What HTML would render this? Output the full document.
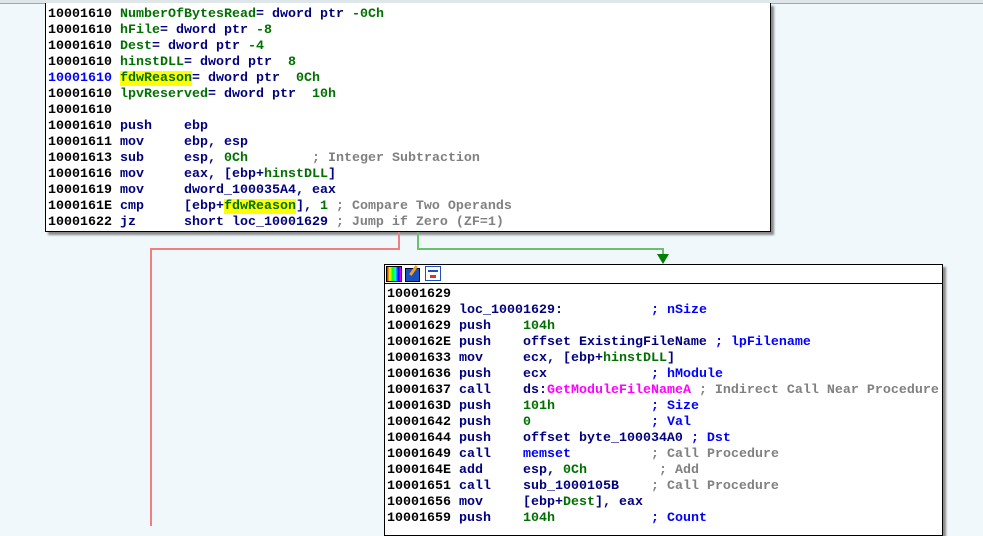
<!DOCTYPE html>
<html><head><style>
body{margin:0;width:983px;height:526px;background:#f0f8fc;position:relative;overflow:hidden;font-family:"Liberation Mono",monospace;}
.box{position:absolute;background:#fff;border:1px solid #000;box-shadow:3px 3px 2px #8a8a8a;}
pre{margin:0;font-family:"Liberation Mono",monospace;font-size:13.33px;line-height:16px;font-weight:bold;color:#000;position:absolute;}
.m{color:#000080}.g{color:#007000}.c{color:#808080}.b{color:#0000ff}.p{color:#ff00ff}.y{background:#ffff00}.a{color:#0000ff}
.ln{position:absolute;}
</style></head><body>
<div style="position:absolute;left:0;top:0;width:983px;height:3px;background:#dfe6ea;border-bottom:1px solid #9aa"></div>
<div class="box" style="left:45px;top:3px;width:724px;height:228px;border-top:none"></div>
<pre style="left:48px;top:7px"><span>10001610</span> <span class="g">NumberOfBytesRead</span><span class="m">= dword ptr </span><span class="g">-0Ch</span>
10001610 <span class="g">hFile</span><span class="m">= dword ptr </span><span class="g">-8</span>
10001610 <span class="g">Dest</span><span class="m">= dword ptr </span><span class="g">-4</span>
10001610 <span class="g">hinstDLL</span><span class="m">= dword ptr  </span><span class="g">8</span>
<span class="a">10001610</span> <span class="g y">fdwReason</span><span class="m">= dword ptr  </span><span class="g">0Ch</span>
10001610 <span class="g">lpvReserved</span><span class="m">= dword ptr  </span><span class="g">10h</span>
10001610
10001610 <span class="m">push    ebp</span>
10001611 <span class="m">mov     ebp, esp</span>
10001613 <span class="m">sub     esp, </span><span class="g">0Ch</span>        <span class="c">; Integer Subtraction</span>
10001616 <span class="m">mov     eax, [ebp+</span><span class="g">hinstDLL</span><span class="m">]</span>
10001619 <span class="m">mov     dword_100035A4, eax</span>
1000161E <span class="m">cmp     [ebp+</span><span class="g y">fdwReason</span><span class="m">], </span><span class="g">1</span> <span class="c">; Compare Two Operands</span>
10001622 <span class="m">jz      short loc_10001629</span> <span class="c">; Jump if Zero (ZF=1)</span></pre>
<div class="ln" style="left:398px;top:232px;width:2px;height:18px;background:#f08080"></div>
<div class="ln" style="left:150px;top:248px;width:250px;height:2px;background:#f08080"></div>
<div class="ln" style="left:150px;top:248px;width:2px;height:278px;background:#f08080"></div>
<div class="ln" style="left:417px;top:232px;width:2px;height:18px;background:#6cbf6c"></div>
<div class="ln" style="left:417px;top:248px;width:247px;height:2px;background:#6cbf6c"></div>
<div class="ln" style="left:662px;top:248px;width:2px;height:8px;background:#6cbf6c"></div>
<div class="ln" style="left:657px;top:254px;width:0;height:0;border-left:6px solid transparent;border-right:6px solid transparent;border-top:10px solid #008000"></div>
<div class="box" style="left:384px;top:264px;width:557px;height:270px"></div>
<div style="position:absolute;left:385px;top:283px;width:557px;height:1px;background:#000"></div>
<div style="position:absolute;left:386px;top:266px;width:14px;height:14px;background:linear-gradient(90deg,#f00,#ff0,#0f0,#0ff,#00f,#f0f);border:1px solid #000"></div>
<div style="position:absolute;left:405px;top:268px;width:13px;height:12px;background:#1a4fc0;border:1px solid #003"></div>
<div style="position:absolute;left:412px;top:265px;width:3px;height:11px;background:#f0a020;transform:rotate(35deg)"></div>
<div style="position:absolute;left:425px;top:266px;width:14px;height:13px;background:#fff;border:1px solid #2050c0"><div style="margin:3px 2px;height:2px;background:#2050c0"></div><div style="margin:2px 4px;height:3px;background:#e03030"></div></div>
<pre style="left:387px;top:287px">10001629
10001629 <span class="m">loc_10001629:</span>           <span class="b">; nSize</span>
10001629 <span class="m">push    </span><span class="g">104h</span>
1000162E <span class="m">push    offset ExistingFileName</span> <span class="b">; lpFilename</span>
10001633 <span class="m">mov     ecx, [ebp+</span><span class="g">hinstDLL</span><span class="m">]</span>
10001636 <span class="m">push    ecx</span>             <span class="b">; hModule</span>
10001637 <span class="m">call    ds:</span><span class="p">GetModuleFileNameA</span> <span class="c">; Indirect Call Near Procedure</span>
1000163D <span class="m">push    </span><span class="g">101h</span>            <span class="b">; Size</span>
10001642 <span class="m">push    </span><span class="g">0</span>               <span class="b">; Val</span>
10001644 <span class="m">push    offset byte_100034A0</span> <span class="b">; Dst</span>
10001649 <span class="m">call    </span><span class="b">memset</span>          <span class="c">; Call Procedure</span>
1000164E <span class="m">add     esp, </span><span class="g">0Ch</span>         <span class="c">; Add</span>
10001651 <span class="m">call    sub_1000105B</span>    <span class="c">; Call Procedure</span>
10001656 <span class="m">mov     [ebp+</span><span class="g">Dest</span><span class="m">], eax</span>
10001659 <span class="m">push    </span><span class="g">104h</span>            <span class="b">; Count</span></pre>
</body></html>
